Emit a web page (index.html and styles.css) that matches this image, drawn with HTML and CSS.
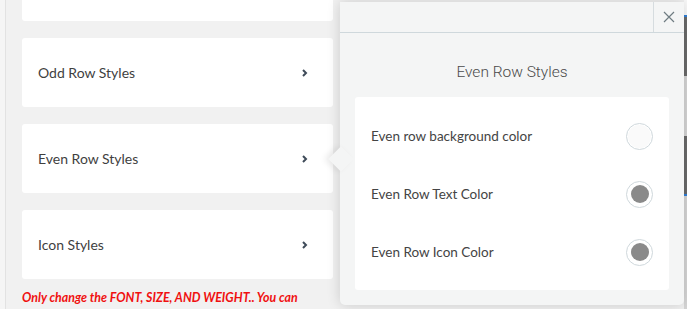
FILE: index.html
```html
<!DOCTYPE html>
<html lang="en">
<head>
  <meta charset="UTF-8" />
  <title>Row Styles</title>
  <link rel="stylesheet" href="styles.css">
</head>
<body>
  <div class="page">
    <main class="panel">
      <div class="menu">
        <div class="menu-item"></div>
        <div class="menu-item">
          <span>Odd Row Styles</span>
          <svg class="chevron" viewBox="0 0 6 8" width="6" height="8"><path d="M1 1l3 3-3 3" fill="none" stroke="#3f4b59" stroke-width="2"/></svg>
        </div>
        <div class="menu-item is-active">
          <span>Even Row Styles</span>
          <svg class="chevron" viewBox="0 0 6 8" width="6" height="8"><path d="M1 1l3 3-3 3" fill="none" stroke="#3f4b59" stroke-width="2"/></svg>
        </div>
        <div class="menu-item">
          <span>Icon Styles</span>
          <svg class="chevron" viewBox="0 0 6 8" width="6" height="8"><path d="M1 1l3 3-3 3" fill="none" stroke="#3f4b59" stroke-width="2"/></svg>
        </div>
      </div>
      <p class="warning">Only change the FONT, SIZE, AND WEIGHT.. You can</p>
    </main>
    <div class="edge"></div>

    <section class="popover" aria-labelledby="pop-title">
      <span class="pointer"></span>
      <header class="pop-head">
        <button class="close" type="button" aria-label="Close">
          <svg viewBox="0 0 12 12" width="12" height="12"><path d="M1 1l10 10M11 1L1 11" stroke="#6f7c82" stroke-width="1.2" fill="none"/></svg>
        </button>
      </header>
      <h2 id="pop-title" class="pop-title">Even Row Styles</h2>
      <div class="pop-card">
        <div class="option">
          <span>Even row background color</span>
          <span class="swatch"><span class="dot dot-light"></span></span>
        </div>
        <div class="option">
          <span>Even Row Text Color</span>
          <span class="swatch"><span class="dot"></span></span>
        </div>
        <div class="option">
          <span>Even Row Icon Color</span>
          <span class="swatch"><span class="dot"></span></span>
        </div>
      </div>
    </section>
  </div>
</body>
</html>
```

FILE: styles.css
```css
* {
  box-sizing: border-box;
}

html, body {
  margin: 0;
  height: 100%;
  overflow: hidden;
}

body {
  font-family: Lato, 'Open Sans', sans-serif;
  background: #f5f5f5;
  color: #3d3d3d;
}

.page {
  position: relative;
  display: flex;
  height: 309px;
}

.panel {
  flex: 1;
  margin-left: 5px;
  border-left: 1px solid #e2e2e2;
  background: #f1f1f1;
  padding: 0 0 0 16px;
}

.menu {
  width: 311px;
  margin-top: -48px;
  display: flex;
  flex-direction: column;
  gap: 17px;
}

.menu-item {
  height: 69px;
  background: #fff;
  border-radius: 3px;
  display: flex;
  align-items: center;
  justify-content: space-between;
  padding: 0 25px 0 16px;
  font-size: 14px;
  color: #3f3f3f;
}

.warning {
  margin: 11px 0 0;
  font-size: 12.4px;
  font-weight: 700;
  font-style: italic;
  color: #f01010;
}

.edge {
  width: 3px;
  background: linear-gradient(#fafafa 0 15px, #2f7fd8 15px 17px, #6b6b6b 17px 76px, #d6d6d6 76px 136px, #6b6b6b 136px 194px, #2f7fd8 194px 196px, #d6d6d6 196px);
}

.popover {
  position: absolute;
  left: 340px;
  top: 2px;
  width: 344px;
  height: 303px;
  background: #f4f5f5;
  border-radius: 0 0 5px 5px;
  box-shadow: 0 0 14px rgba(0,0,0,0.16);
  display: flex;
  flex-direction: column;
}

.pointer {
  position: absolute;
  left: -8px;
  top: 148px;
  width: 18px;
  height: 18px;
  background: #f4f5f5;
  transform: rotate(45deg);
  box-shadow: -3px 3px 6px rgba(0,0,0,0.08);
}

.pop-head {
  position: relative;
  height: 31px;
  border-bottom: 1px solid #cfd8dc;
  display: flex;
  justify-content: flex-end;
  background: #f4f5f5;
}

.close {
  width: 31px;
  height: 30px;
  border: none;
  border-left: 1px solid #d6dcdf;
  background: none;
  padding: 0;
  display: flex;
  align-items: center;
  justify-content: center;
}

.pop-title {
  margin: 0;
  padding: 30px 0 0;
  height: 64px;
  text-align: center;
  font-family: Roboto, sans-serif;
  font-weight: 300;
  font-size: 15.5px;
  color: #4a4a4a;
}

.pop-card {
  margin: 0 15px;
  background: #fff;
  border-radius: 3px;
  padding: 10px 16px 9px;
}

.option {
  height: 58px;
  display: flex;
  align-items: center;
  justify-content: space-between;
  font-size: 13.5px;
  color: #444;
}

.swatch {
  width: 27px;
  height: 27px;
  border-radius: 50%;
  border: 1px solid #cfd8dc;
  background: #fff;
  display: flex;
  align-items: center;
  justify-content: center;
}

.dot {
  width: 18px;
  height: 18px;
  border-radius: 50%;
  background: #8a8a8a;
}

.dot-light {
  width: 23px;
  height: 23px;
  background: #fafafa;
}
```
